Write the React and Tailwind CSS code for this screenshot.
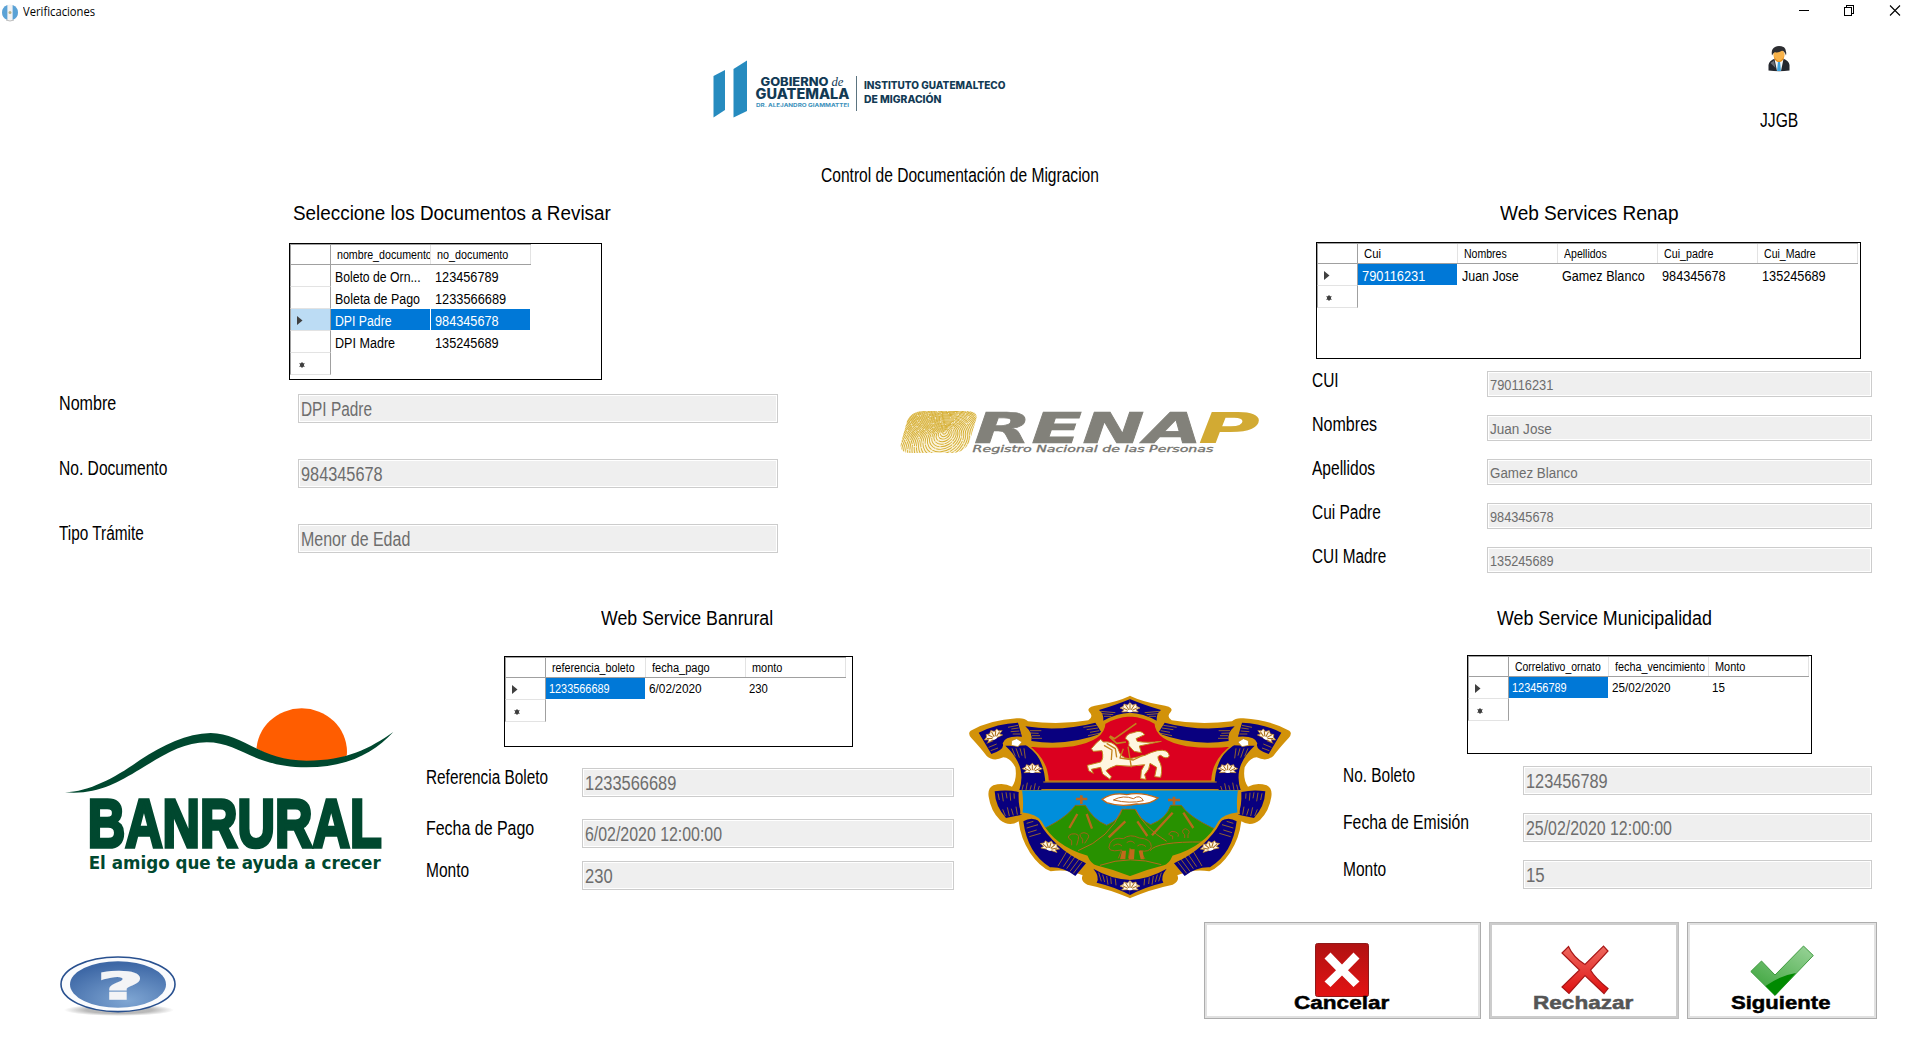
import React, { useLayoutEffect, useRef, useState } from "react";

/* Text condensed or expanded horizontally to a given advance width. */
function Fit({ w, className = "", children }) {
  const ref = useRef(null);
  const [scale, setScale] = useState(1);
  useLayoutEffect(() => {
    setScale(w / ref.current.offsetWidth);
  }, [w]);
  return (
    <span
      ref={ref}
      className={`inline-block origin-left whitespace-nowrap ${className}`}
      style={{ transform: `scaleX(${scale})` }}
    >
      {children}
    </span>
  );
}

function Heading({ w, className, children }) {
  return (
    <h2 className={`h-6 leading-6 text-[20px] ${className}`}>
      <Fit w={w}>{children}</Fit>
    </h2>
  );
}

function Field({ label, lw, value, vw, small, labelCol, boxCls, className = "" }) {
  return (
    <div className={`flex items-start ${className}`}>
      <label className={`shrink-0 pl-px text-[19.5px] leading-[18px] ${labelCol}`}>
        <Fit w={lw}>{label}</Fit>
      </label>
      <div className={`shrink-0 border border-[#cccccc] bg-white p-px ${boxCls}`}>
        <div
          className={`h-full overflow-hidden bg-[#efefef] pl-px text-[#6d6d6d] ${
            small ? "text-[15.5px] leading-[23px]" : "text-[19.5px] leading-[27px]"
          }`}
        >
          <Fit w={vw}>{value}</Fit>
        </div>
      </div>
    </div>
  );
}

function Marker({ type }) {
  return (
    <svg width="20" height="21" viewBox="0 0 20 21" className="block">
      {type === "current" && <path d="M6 7 L11.5 11.5 L6 16 Z" fill="#404040" />}
      {type === "new" && (
        <g>
          <circle cx="11" cy="12" r="2.2" fill="#404040" />
          <path d="M11 9v6M8.4 10.4l5.2 3.2M13.6 10.4l-5.2 3.2" stroke="#404040" strokeWidth="0.8" />
        </g>
      )}
    </svg>
  );
}

function Grid({ heads, rows, selected, wholeRow, small, className }) {
  return (
    <div className={`border border-black bg-white ${className}`}>
      <div className="flex h-[21px]">
        <div className="w-[41px] shrink-0 border border-[#a0a0a0] border-l-[#a0a0a0]" />
        {heads.map(([t, w]) => (
          <div
            key={t}
            className="w-[100px] shrink-0 border-t border-b border-[#a0a0a0] text-[12px] leading-[20px]"
          >
            <div className="h-[19px] overflow-hidden border-r border-[#e3e3e3] pl-[6px]">
              <Fit w={w}>{t}</Fit>
            </div>
          </div>
        ))}
      </div>
      {rows.map((r, i) => {
        const cur = i === selected;
        return (
          <div key={i} className="flex h-[22px]">
            <div
              className={`w-[41px] shrink-0 border-x border-x-[#a0a0a0] border-b border-b-[#e3e3e3] ${
                cur && wholeRow ? "bg-[#bcdcf4]" : ""
              }`}
            >
              <Marker type={cur ? "current" : i === rows.length - 1 ? "new" : ""} />
            </div>
            {r.map(([t, w], j) => (
              <div
                key={j}
                className={`mr-px h-[21px] w-[99px] shrink-0 overflow-hidden ${
                  small ? "pl-[3px] text-[12.5px] leading-[22px]" : "pl-[4px] text-[15.5px] leading-[23px]"
                } ${cur && (wholeRow || j === 0) ? "bg-[#0078d7] text-white" : ""}`}
              >
                <Fit w={w}>{t}</Fit>
              </div>
            ))}
          </div>
        );
      })}
    </div>
  );
}

function TitleBar() {
  return (
    <header className="flex h-6 items-center">
      <svg width="16" height="18" viewBox="0 0 16 18" className="ml-[2px] mt-px">
        <ellipse cx="8" cy="8.5" rx="8" ry="8" fill="#f3f3f3" />
        <path d="M5.4 1 Q0 3 0 8.5 Q0 14 5.4 16 Z" fill="#5aa2d6" />
        <path d="M10.6 1 Q16 3 16 8.5 Q16 14 10.6 16 Z" fill="#5aa2d6" />
        <circle cx="8" cy="8.5" r="1.5" fill="#b5b28a" />
        <path d="M4 16 Q8 18 12 16" stroke="#bbb" fill="none" />
      </svg>
      <span className="ml-[5px] w-[80px] font-['Open_Sans'] text-[12px] leading-6">
        <Fit w={72}>Verificaciones</Fit>
      </span>
      <svg width="120" height="20" viewBox="0 0 120 20" className="ml-[1692px] -mt-1" fill="none" stroke="#000" shapeRendering="crispEdges">
        <path d="M4 10.5h10" />
        <path d="M49.5 7.5h7v8h-7zM51.5 7.5v-2h7v8h-2" />
        <path d="M95 5.5l10 10M105 5.5l-10 10" shapeRendering="auto" strokeWidth="1.1" />
      </svg>
    </header>
  );
}

function GovLogo() {
  return (
    <svg width="310" height="70" viewBox="705 55 310 70" className="shrink-0">
      <g fill="#268bbf">
        <path d="M713.5 76L725 70V110L713.5 117.5Z" />
        <path d="M733.5 69L747 60.5V111L733.5 117.5Z" />
      </g>
      <g fill="#123a54" fontFamily="Inter" fontWeight="800">
        <text x="760.5" y="86" fontSize="11.5" textLength="68" lengthAdjust="spacingAndGlyphs">GOBIERNO</text>
        <text x="831.5" y="86" fontSize="13" fontWeight="400" fontStyle="italic" fontFamily="Liberation Serif" textLength="12" lengthAdjust="spacingAndGlyphs">de</text>
        <text x="755.5" y="99" fontSize="14" textLength="94" lengthAdjust="spacingAndGlyphs">GUATEMALA</text>
        <text x="864" y="89" fontSize="10" textLength="141.5" lengthAdjust="spacingAndGlyphs">INSTITUTO GUATEMALTECO</text>
        <text x="864" y="103" fontSize="10" textLength="77.5" lengthAdjust="spacingAndGlyphs">DE MIGRACIÓN</text>
      </g>
      <text x="756" y="107" fontSize="5" fontFamily="Inter" fontWeight="700" fill="#3a90bb" textLength="93" lengthAdjust="spacingAndGlyphs">DR. ALEJANDRO GIAMMATTEI</text>
      <path d="M856.5 76V111" stroke="#5b7480" />
    </svg>
  );
}

function UserIcon() {
  return (
    <svg width="22" height="26" viewBox="0 0 22 26">
      <path d="M0.5 24.5V19Q1 14.5 7 12.5L11 15L15 12.5Q21 14.5 21.5 19V24.5Q11 26 0.5 24.5Z" fill="#24272e" />
      <path d="M6.5 13L9 25H13L15.5 13L11 15Z" fill="#f4f6f8" />
      <path d="M10 15.5H12L13 25H9Z" fill="#3fa3dc" />
      <path d="M2.5 17L6 14.5L7.5 22Z" fill="#6a6e76" />
      <ellipse cx="11" cy="9" rx="5.6" ry="6.4" fill="#f7b24a" />
      <path d="M6 10Q8 14.5 11 15.2Q14 14.5 16 10Q15.5 16 11 16Q6.5 16 6 10Z" fill="#e78c17" />
      <path d="M4 9.5Q2.8 3 7 1Q11 -1 16 1.2Q19 3.5 18 9.5Q16.5 5 14 4.8Q9 7.5 7 6Q5 7 4 9.5Z" fill="#2c2d31" />
    </svg>
  );
}

function RenapLogo() {
  const arcs = Array.from({ length: 34 }, (_, i) => i);
  return (
    <svg width="400" height="80" viewBox="880 390 400 80" className="mt-[195px] shrink-0">
      <defs>
        <clipPath id="finger">
          <path d="M922 411H968Q979 412 976 420L969 443Q964 453 950 453H909Q899 452 901 443L907 421Q911 412 922 411Z" />
        </clipPath>
      </defs>
      <g clipPath="url(#finger)">
        <rect x="898" y="408" width="82" height="48" fill="#fbf4dc" />
        {arcs.map((i) => (
          <ellipse key={i} cx={945 - i * 0.5} cy={434 + i * 0.55} rx={2 + i * 2.2} ry={1.4 + i * 1.65} transform="rotate(-32 942 434)" fill="none" stroke="#d6af35" strokeWidth="0.95" strokeDasharray={`${9 + (i % 4) * 4} 0.8`} />
        ))}
      </g>
      <g fontFamily="DejaVu Sans" fontWeight="700" fontStyle="italic" fontSize="42.5">
        <text x="974" y="442.6" fill="#82817a" stroke="#82817a" strokeWidth="0.6" textLength="228" lengthAdjust="spacingAndGlyphs">RENA</text>
        <text x="1198" y="442.6" fill="#d2aa33" textLength="62" lengthAdjust="spacingAndGlyphs">P</text>
      </g>
      <text x="972.5" y="451.7" fontFamily="DejaVu Sans" fontStyle="italic" fontSize="8.6" fill="#74736e" stroke="#74736e" strokeWidth="0.3" textLength="241" lengthAdjust="spacingAndGlyphs">Registro Nacional de las Personas</text>
    </svg>
  );
}

function BanruralLogo() {
  return (
    <svg width="380" height="220" viewBox="0 0 1140 660" className="ml-10 mt-[85px]">
      <ellipse cx="785" cy="216" rx="136" ry="131" fill="#ff5d00" />
      <path d="M640 200C700 235 740 252 800 252C860 252 900 240 940 215V360H640Z" fill="#fff" />
      <path d="M75 337C150 335 230 290 300 240C370 195 440 160 512 159C610 160 660 242 800 242C920 242 990 205 1060 156C1000 220 920 262 800 262C640 262 600 187 500 187C430 187 370 225 300 268C230 310 170 345 75 337Z" fill="#00482f" />
      <g fill="#00482f" fontWeight="700">
        <text x="143" y="501" fontFamily="Liberation Sans" fontSize="208" stroke="#00482f" strokeWidth="11" textLength="882" lengthAdjust="spacingAndGlyphs">BANRURAL</text>
        <text x="146" y="567" fontFamily="DejaVu Sans" fontSize="51" textLength="876" lengthAdjust="spacingAndGlyphs">El amigo que te ayuda a crecer</text>
      </g>
    </svg>
  );
}

function Shell({ x, y, r = 0 }) {
  return (
    <g transform={`translate(${x} ${y}) rotate(${r})`}>
      <path d="M-7 11L-25 12L-18 5L-30 0L-20 -5L-18 -12L-8 -9L0 -16L8 -9L18 -12L20 -5L30 0L18 5L25 12L7 11Z" fill="#fff6e4" stroke="#c98a1c" strokeWidth="2" />
      <path d="M-5 8L-22 -1M-3 6L-13 -9M0 6V-12M3 6L13 -9M5 8L22 -1" stroke="#a86d1a" strokeWidth="3" />
      <ellipse cx="0" cy="9" rx="8" ry="4" fill="#fff" />
    </g>
  );
}

function HalfFrame() {
  return (
    <g>
      <path
        d="M541 47Q500 66 450 74Q405 80 418 96Q432 110 415 121Q330 136 234 124Q222 112 200 115Q120 120 62 152Q52 160 64 174Q92 204 110 228Q130 246 160 232Q182 234 196 262Q202 298 186 320Q160 306 130 316Q112 325 116 350Q122 392 150 420Q178 442 206 424Q212 476 240 518Q268 560 302 574Q352 566 398 586Q390 604 412 614Q480 628 541 655Z"
        fill="#d29209"
      />
      <g fill="#09007f">
        <path d="M541 57Q500 74 447 90Q462 100 460 122Q500 100 541 98Z" />
        <path d="M226 139Q330 156 436 128L456 160Q350 200 244 183Q250 160 226 139Z" />
        <path d="M86 158Q142 130 204 128L216 170Q164 166 158 190Q166 208 124 222Z" />
        <path d="M166 197Q200 198 232 196Q290 240 286 330H208Q232 258 166 197Z" />
        <path d="M134 334Q170 328 206 336Q204 380 216 404L168 414Q136 380 134 334Z" />
        <path d="M220 424Q244 408 270 424Q310 506 408 550L376 588Q340 560 300 562Q232 520 220 424Z" />
        <path d="M430 566Q480 596 541 600V646Q500 622 440 608Q450 590 430 566Z" />
      </g>
      <g stroke="#d29209" strokeWidth="2" fill="none">
        <path d="M452 94l44 4M456 101l34 3M462 109l22 0M240 152h34M240 159l26 1M246 167h24M246 175h30M440 136l-40 6M444 144l-34 5M448 152l-28 5M452 159l-38 8" />
        <path d="M204 136l-30 6M206 144l-22 3M208 153l-26 2M212 162l-24 0M104 178l22-8M110 190l20-8M116 202l24-10M122 212l22-8" />
        <path d="M186 205l10 24M198 205l10 28M210 205l6 22M222 205l4 30M216 330l4-16M228 330l4-22M240 330l4-14M252 330l4-20M264 330l4-12" />
        <path d="M144 340l4 20M156 338l4 26M168 337l3 18M180 338l2 24M192 340l1 16M166 408l-8-20M178 408l-6-26M190 406l-6-20M202 404l-4-24" />
        <path d="M230 430l20-6M230 444l34-10M234 458l26-8M238 470l34-10M340 560l30-44M350 566l32-46M360 574l30-40M370 580l26-34M324 558l30-50" />
        <path d="M446 578l8 26M458 584l6 22M470 588l4 26M482 592l2 20M496 596l2 20" />
      </g>
      <path d="M185 182L200 176L216 186L204 200L184 196Z" fill="#fff" stroke="#b98412" strokeWidth="2" />
      <Shell x={130} y={166} r={-28} />
      <Shell x={247} y={266} r={0} />
      <Shell x={300} y={499} r={16} />
    </g>
  );
}

function Shield() {
  return (
    <svg width="324" height="204" viewBox="54 45 972 612" className="mt-[100px]">
      <HalfFrame />
      <g transform="translate(1080 0) scale(-1 1)">
        <HalfFrame />
      </g>
      <Shell x={540} y={84} />
      <Shell x={540} y={618} />
      <path d="M540 107Q495 110 464 130Q462 180 370 196Q300 205 234 197Q292 240 294 304H786Q788 240 846 197Q780 205 710 196Q618 180 616 130Q585 110 540 107Z" fill="#db001f" stroke="#d29209" strokeWidth="5" />
      <rect x="272" y="305" width="536" height="24" fill="#09007f" />
      <path d="M280 306H800M274 329H806" stroke="#d29209" strokeWidth="3" />
      <clipPath id="low">
        <path d="M213 331H867Q862 370 866 400Q820 405 808 426Q770 500 670 530Q660 555 640 560Q590 572 540 592Q490 572 440 560Q420 555 410 530Q310 500 272 426Q260 405 214 400Q218 370 213 331Z" />
      </clipPath>
      <g clipPath="url(#low)">
        <rect x="200" y="325" width="680" height="280" fill="#008edb" />
        <path d="M200 480Q340 430 376 376H406Q430 420 470 436Q510 420 516 388H556Q570 420 602 434Q650 416 662 376H694Q730 430 880 480V610H200Z" fill="#289100" stroke="#8a6a12" strokeWidth="3" />
        <g fill="none" stroke="#b7691b" strokeWidth="3">
          <path d="M382 402L358 444M410 402L426 446M526 424L476 472M562 424L592 468M668 398L606 466M700 398L730 444" strokeWidth="7" />
          <path d="M516 388Q480 475 384 512M556 388Q584 444 650 484M600 512Q620 484 760 486M450 556Q540 524 634 554" />
          <path d="M510 372l14 16M532 372l-8 14M548 372l-8 14" strokeWidth="2" stroke="#4c8d8b" />
        </g>
        <g fill="#289100" stroke="#a16318" strokeWidth="3">
          <path d="M505 535L515 510Q465 520 480 490Q490 470 520 476Q540 460 568 474Q604 476 604 500Q600 518 570 512L585 537M535 535L540 505L550 537" />
          <path d="M365 496V482Q345 470 365 462Q390 458 385 478L380 496M398 490V478Q380 460 402 458Q424 462 412 478L404 490" />
          <path d="M668 478V468Q646 464 666 454Q690 456 684 470M704 474V464Q690 452 706 446Q724 452 714 464V474" />
        </g>
        <path d="M510 538L516 512L528 512L526 538ZM536 538L540 508L554 508L552 538ZM572 538L566 512H578L582 538Z" fill="#c2691b" />
        <path d="M490 498q14-12 26 0M530 488q14-10 24 2M562 498q14-10 26 2" stroke="#a16318" strokeWidth="3" fill="none" />
      </g>
      <path d="M213 331Q218 370 214 400Q260 405 272 426Q310 500 410 530Q420 555 440 560Q490 572 540 592Q590 572 640 560Q660 555 670 530Q770 500 808 426Q820 405 866 400Q862 370 867 331" fill="none" stroke="#d29209" strokeWidth="7" />
      <path d="M394 346v26M378 357h34M672 350v24M654 360h36" stroke="#b7651f" strokeWidth="8" />
      <path d="M456 358Q490 336 530 344Q570 334 624 354Q600 374 560 372Q510 382 470 368Z" fill="#fff" stroke="#c2691b" strokeWidth="4" />
      <path d="M490 360Q520 344 550 356Q570 342 580 362Q540 372 490 360Z" fill="none" stroke="#c2691b" strokeWidth="3" />
      <g fill="#fff6e0" stroke="#c2841d" strokeWidth="3" strokeLinejoin="round">
        <path d="M424 206L440 188L452 178L460 186Q490 182 504 206Q512 236 540 236L585 226Q604 216 622 212Q656 206 658 228Q650 240 632 226Q620 226 626 240Q640 262 632 292L614 290L620 262L600 250Q600 268 584 284L588 298L572 296L574 272L584 254Q540 262 500 256Q476 264 468 272L484 290L480 298L458 282L452 262L424 268L430 280L416 272L412 256L452 246Q462 236 456 212L430 214Z" />
        <path d="M526 176Q540 182 536 196L552 214L574 218L568 198L634 184Q590 190 562 184L558 176L584 164Q574 148 550 158Q530 160 526 176Z" />
        <path d="M559 130L494 176L480 168M478 170L500 190L528 186" fill="none" strokeWidth="5" />
        <path d="M462 196L486 210L484 240M470 190L496 206L500 232M520 206L510 234L550 240L578 226M534 200L544 262" fill="none" strokeWidth="4" />
      </g>
    </svg>
  );
}

function HelpIcon() {
  return (
    <svg width="130" height="70" viewBox="53 950 130 70" className="ml-[53px] mt-10">
      <defs>
        <radialGradient id="hb" cx="0.6" cy="0.85" r="0.8">
          <stop offset="0" stopColor="#7fa6d3" />
          <stop offset="1" stopColor="#3e68a6" />
        </radialGradient>
        <radialGradient id="hs">
          <stop offset="0.6" stopColor="#8a8a8a" stopOpacity="0.6" />
          <stop offset="1" stopColor="#8a8a8a" stopOpacity="0" />
        </radialGradient>
      </defs>
      <ellipse cx="119" cy="1010" rx="55" ry="6" fill="url(#hs)" />
      <ellipse cx="118" cy="984.3" rx="57" ry="27.3" fill="#fafbfd" stroke="#28508f" strokeWidth="1.6" />
      <ellipse cx="118" cy="984.5" rx="48" ry="23.2" fill="url(#hb)" />
      <text x="97.5" y="998.8" fontFamily="DejaVu Sans" fontWeight="700" fontSize="37" fill="#f3f4f6" stroke="#f3f4f6" strokeWidth="1.6" textLength="46" lengthAdjust="spacingAndGlyphs">?</text>
    </svg>
  );
}

function CancelIcon() {
  return (
    <svg width="54" height="54" viewBox="0 0 54 54" className="block">
      <defs>
        <linearGradient id="cg" x1="0" y1="0" x2="0" y2="1">
          <stop offset="0" stopColor="#b01212" />
          <stop offset="1" stopColor="#e31313" />
        </linearGradient>
      </defs>
      <rect x="0.5" y="0.5" width="53" height="53" rx="2" fill="url(#cg)" stroke="#8f1a1a" />
      <path d="M15.5 9.5L27 21.5L38.5 9.5L44.5 15.5L33 27.2L44.5 38.5L38.5 44L27 32.5L15.5 44L9.5 38.5L21 27.2L9.5 15.5Z" fill="#fff" />
    </svg>
  );
}

function RejectIcon() {
  return (
    <svg width="48" height="50" viewBox="0 0 48 50" className="block">
      <defs>
        <linearGradient id="rg" x1="0" y1="0" x2="0" y2="1">
          <stop offset="0" stopColor="#ee6a60" />
          <stop offset="1" stopColor="#df1010" />
        </linearGradient>
      </defs>
      <path d="M7.5 1.5Q12 12 24 19.5L42.5 1L47 6L29.5 25Q34 33 47 43.5L43 48.5L24 30.5L8 48.5L1 42L18.5 25L1 8Z" fill="url(#rg)" stroke="#a81616" strokeWidth="1.2" />
    </svg>
  );
}

function CheckIcon() {
  return (
    <svg width="64" height="52" viewBox="0 0 64 52" className="block">
      <defs>
        <linearGradient id="kg" x1="1" y1="0" x2="0.3" y2="1">
          <stop offset="0" stopColor="#9bd49a" />
          <stop offset="1" stopColor="#3fa63f" />
        </linearGradient>
      </defs>
      <path d="M0.8 26.5L11.5 16L25 30L53.5 1L63.3 10.5L25 50.5Z" fill="url(#kg)" stroke="#3f9a3f" />
      <path d="M15.5 41Q30 30.5 46 28L25 50.5Z" fill="#008a00" />
    </svg>
  );
}

function ActionButton({ icon, label, w, className, inner, textCls, iconCls }) {
  return (
    <button className={`flex h-[97px] shrink-0 flex-col border ${className}`}>
      <span className={`flex w-full grow flex-col items-start border-2 bg-white ${inner}`}>
        <span className={`flex h-[56px] items-start ${iconCls}`}>{icon}</span>
        <span className={`-mt-[5px] text-[19px] font-bold leading-[18px] [-webkit-text-stroke:0.5px] ${textCls}`}>
          <Fit w={w}>{label}</Fit>
        </span>
      </span>
    </button>
  );
}

export default function App() {
  return (
    <div className="flex h-[1039px] w-[1920px] flex-col overflow-hidden bg-white font-['Liberation_Sans',Arial,sans-serif] text-black">
      <TitleBar />

      <div className="flex h-[136px] items-start">
        <div className="ml-[705px] mt-[31px]">
          <GovLogo />
        </div>
        <div className="ml-[744px] mt-[22px] flex flex-col">
          <div className="ml-[9px] h-[26px]">
            <UserIcon />
          </div>
          <div className="mt-[36px] h-6 pl-px text-[19.5px] leading-6">
            <Fit w={38.5}>JJGB</Fit>
          </div>
        </div>
      </div>

      <h1 className="ml-[821px] h-[35px] pt-[3px] text-[19.5px] leading-6">
        <Fit w={278}>Control de Documentación de Migracion</Fit>
      </h1>

      <div className="flex h-[400px] items-start">
        <section className="w-[880px] pt-[6px]">
          <Heading w={318} className="ml-[293px]">Seleccione los Documentos a Revisar</Heading>
          <Grid
            className="ml-[289px] mt-[18px] h-[137px] w-[313px]"
            wholeRow
            selected={2}
            heads={[["nombre_documento", 95], ["no_documento", 71]]}
            rows={[
              [["Boleto de Orn...", 86], ["123456789", 64]],
              [["Boleta de Pago", 85], ["1233566689", 71]],
              [["DPI Padre", 57], ["984345678", 64]],
              [["DPI Madre", 60], ["135245689", 64]],
              [],
            ]}
          />
          <div className="ml-[58px] mt-[14px] flex flex-col gap-9">
            <Field label="Nombre" lw={57} value="DPI Padre" vw={71} labelCol="w-[240px]" boxCls="h-[29px] w-[480px]" />
            <Field label="No. Documento" lw={108} value="984345678" vw={82} labelCol="w-[240px]" boxCls="h-[29px] w-[480px]" />
            <Field label="Tipo Trámite" lw={85} value="Menor de Edad" vw={109} labelCol="w-[240px]" boxCls="h-[29px] w-[480px]" />
          </div>
        </section>

        <RenapLogo />

        <section className="w-[640px] pt-[6px]">
          <Heading w={179} className="ml-[220px]">Web Services Renap</Heading>
          <Grid
            className="ml-[36px] mt-[17px] h-[117px] w-[545px]"
            selected={0}
            heads={[["Cui", 17], ["Nombres", 43], ["Apellidos", 43], ["Cui_padre", 49], ["Cui_Madre", 52]]}
            rows={[
              [["790116231", 63], ["Juan Jose", 57], ["Gamez Blanco", 83], ["984345678", 64], ["135245689", 64]],
              [],
            ]}
          />
          <div className="ml-[31px] mt-[12px] flex flex-col gap-[18px]">
            <Field small label="CUI" lw={27} value="790116231" vw={63} labelCol="w-[176px]" boxCls="h-[26px] w-[385px]" />
            <Field small label="Nombres" lw={65} value="Juan Jose" vw={62} labelCol="w-[176px]" boxCls="h-[26px] w-[385px]" />
            <Field small label="Apellidos" lw={63} value="Gamez Blanco" vw={88} labelCol="w-[176px]" boxCls="h-[26px] w-[385px]" />
            <Field small label="Cui Padre" lw={69} value="984345678" vw={64} labelCol="w-[176px]" boxCls="h-[26px] w-[385px]" />
            <Field small label="CUI Madre" lw={74} value="135245689" vw={64} labelCol="w-[176px]" boxCls="h-[26px] w-[385px]" />
          </div>
        </section>
      </div>

      <div className="flex h-[315px] items-start">
        <BanruralLogo />

        <section className="w-[548px] pt-[11px]">
          <Heading w={172} className="ml-[181px]">Web Service Banrural</Heading>
          <Grid
            className="ml-[84px] mt-[26px] h-[91px] w-[349px]"
            small
            selected={0}
            heads={[["referencia_boleto", 83], ["fecha_pago", 58], ["monto", 30]]}
            rows={[[["1233566689", 61], ["6/02/2020", 53], ["230", 19]], []]}
          />
          <div className="ml-[5px] mt-[21px]">
            <Field label="Referencia Boleto" lw={122} value="1233566689" vw={91} labelCol="w-[157px]" boxCls="h-[29px] w-[372px]" />
            <Field className="mt-[22px]" label="Fecha de Pago" lw={108} value="6/02/2020 12:00:00" vw={137} labelCol="w-[157px]" boxCls="h-[29px] w-[372px]" />
            <Field className="mt-[13px]" label="Monto" lw={43} value="230" vw={28} labelCol="w-[157px]" boxCls="h-[29px] w-[372px]" />
          </div>
        </section>

        <Shield />

        <section className="w-[628px] pt-[11px]">
          <Heading w={215} className="ml-[205px]">Web Service Municipalidad</Heading>
          <Grid
            className="ml-[175px] mt-[25px] h-[99px] w-[345px]"
            small
            selected={0}
            heads={[["Correlativo_ornato", 86], ["fecha_vencimiento", 90], ["Monto", 30]]}
            rows={[[["123456789", 55], ["25/02/2020", 59], ["15", 13]], []]}
          />
          <div className="ml-[50px] mt-[12px] flex flex-col gap-[18px]">
            <Field label="No. Boleto" lw={72} value="123456789" vw={82} labelCol="w-[181px]" boxCls="h-[29px] w-[349px]" />
            <Field label="Fecha de Emisión" lw={126} value="25/02/2020 12:00:00" vw={146} labelCol="w-[181px]" boxCls="h-[29px] w-[349px]" />
            <Field label="Monto" lw={43} value="15" vw={19} labelCol="w-[181px]" boxCls="h-[29px] w-[349px]" />
          </div>
        </section>
      </div>

      <footer className="flex h-[129px] items-start">
        <HelpIcon />
        <div className="ml-[1021px] mt-3 flex gap-2">
          <ActionButton icon={<CancelIcon />} label="Cancelar" w={95} className="w-[277px] border-[#adadad]" inner="border-[#e1e1e1]" iconCls="ml-[108px] mt-[18px]" textCls="ml-[87px]" />
          <ActionButton icon={<RejectIcon />} label="Rechazar" w={101} className="w-[190px] border-[#bfbfbf]" inner="border-[#cccccc]" iconCls="ml-[69px] mt-[18px] pt-[2px]" textCls="ml-[41px] text-[#555555]" />
          <ActionButton icon={<CheckIcon />} label="Siguiente" w={100} className="w-[190px] border-[#adadad]" inner="border-[#e1e1e1]" iconCls="ml-[60px] mt-[18px] pt-[2px]" textCls="ml-[41px]" />
        </div>
      </footer>
    </div>
  );
}
